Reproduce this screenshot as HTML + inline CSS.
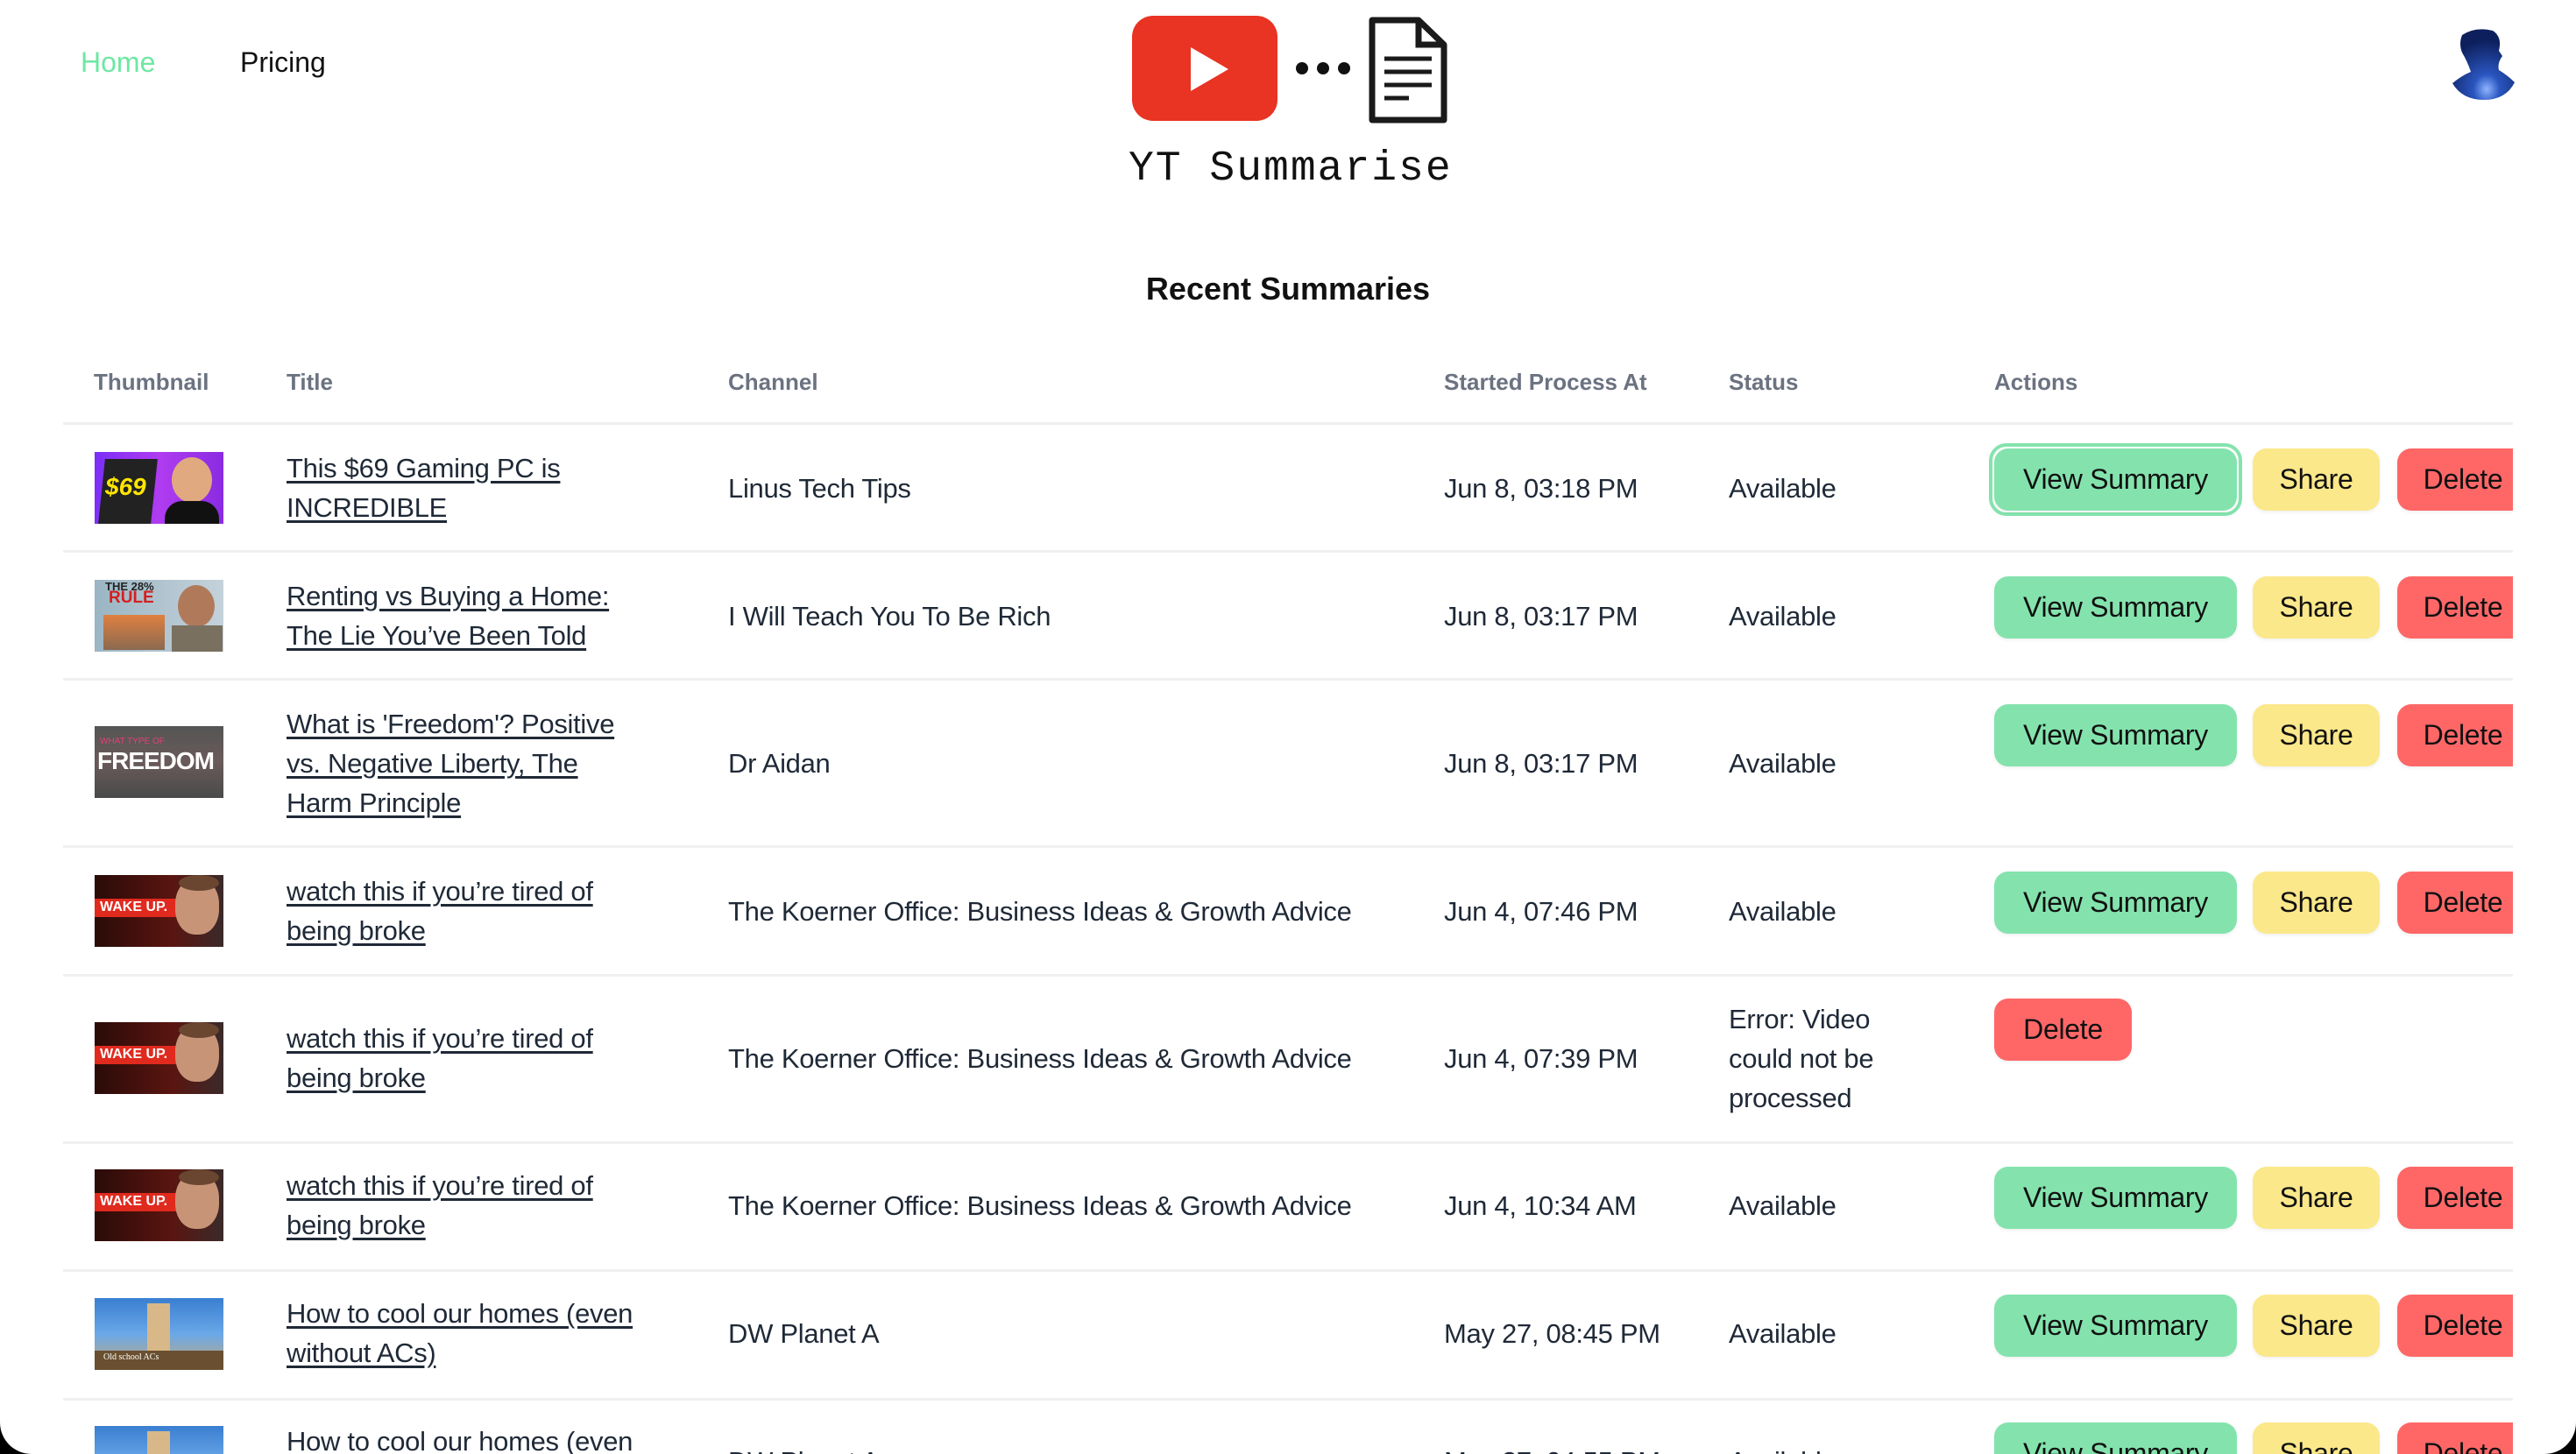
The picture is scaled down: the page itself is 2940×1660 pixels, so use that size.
<!DOCTYPE html>
<html><head><meta charset="utf-8"><style>
*{margin:0;padding:0;box-sizing:border-box}
html,body{width:2940px;height:1660px;overflow:hidden;background:#000}
#pg{position:absolute;left:0;top:0;width:2940px;height:1660px;background:#fff;border-radius:0 0 36px 36px;overflow:hidden;font-family:"Liberation Sans",sans-serif;color:#1f2937}
.a{position:absolute}
.nav{font-size:32px;top:53px}
.h{font-size:26px;font-weight:bold;color:#6b7280;top:421px}
.line{position:absolute;left:72px;width:2796px;height:3px;background:#f0f0f0}
.t{position:absolute;font-size:31px;line-height:45px;white-space:nowrap;letter-spacing:-0.3px}
.u{text-decoration:underline;text-decoration-thickness:3px;text-underline-offset:4px}
.th{position:absolute;left:108px;width:147px;height:82px;overflow:hidden}
.clip{position:absolute;left:2250px;top:484px;width:618px;height:1176px;overflow:hidden}
.b{position:absolute;height:71px;border-radius:16px;font-size:32px;line-height:71px;text-align:center;color:#111;letter-spacing:-0.3px;box-shadow:0 2px 4px rgba(0,0,0,.06)}
.g{background:#84e3ad;left:26px;width:277px}
.y{background:#fbe88a;left:321px;width:145px}
.r{background:#ff6767;left:486px;width:150px}
</style></head><body><div id="pg">
<div class="a nav" style="left:92px;color:#6ee7a3">Home</div>
<div class="a nav" style="left:274px;color:#111">Pricing</div>
<svg class="a" style="left:1286px;top:14px" width="370" height="132" viewBox="0 0 370 132">
<rect x="6" y="4" width="166" height="120" rx="24" fill="#e93323"/>
<path d="M73 40 L73 90 L116 65 Z" fill="#fff"/>
<circle cx="200" cy="64" r="7" fill="#111"/><circle cx="224" cy="64" r="7" fill="#111"/><circle cx="248" cy="64" r="7" fill="#111"/>
<path d="M280 9 H333 L362 37 V123 H280 Z" fill="none" stroke="#1a1a1a" stroke-width="7" stroke-linejoin="round"/>
<path d="M333 9 V37 H362" fill="none" stroke="#1a1a1a" stroke-width="7"/>
<path d="M294 53 H348 M294 68 H348 M294 83 H348 M294 98 H322" stroke="#1a1a1a" stroke-width="5"/>
</svg>
<div class="a" style="left:1288px;top:166px;font-family:'Liberation Mono',monospace;font-size:48px;color:#111;letter-spacing:2px">YT Summarise</div>
<svg class="a" style="left:2790px;top:30px" width="90" height="86" viewBox="0 0 90 86"><defs><radialGradient id="sg" cx="0.55" cy="0.85" r="0.7"><stop offset="0" stop-color="#8fb4ff"/><stop offset="0.3" stop-color="#2a56c0"/><stop offset="1" stop-color="#0d1f5c"/></radialGradient></defs>
<path d="M20 10 Q35 0 55 5 Q66 12 62 28 L66 34 Q60 42 62 50 Q72 56 80 64 Q70 84 45 84 Q20 84 9 65 Q20 56 30 52 Q26 40 20 30 Q16 20 20 10Z" fill="url(#sg)"/></svg>
<div class="a" style="left:0;width:2940px;text-align:center;top:309px;font-size:36px;font-weight:bold;color:#111">Recent Summaries</div>
<div class="a h" style="left:107px">Thumbnail</div>
<div class="a h" style="left:327px">Title</div>
<div class="a h" style="left:831px">Channel</div>
<div class="a h" style="left:1648px">Started Process At</div>
<div class="a h" style="left:1973px">Status</div>
<div class="a h" style="left:2276px">Actions</div>
<div class="line" style="top:482px"></div>
<div class="line" style="top:628px"></div>
<div class="line" style="top:774px"></div>
<div class="line" style="top:965px"></div>
<div class="line" style="top:1112px"></div>
<div class="line" style="top:1303px"></div>
<div class="line" style="top:1449px"></div>
<div class="line" style="top:1596px"></div>

<div class="th" style="top:516px;background:linear-gradient(90deg,#7b2ff7,#b03cf0 50%,#8a2be2)"><div class="a" style="left:8px;top:8px;width:60px;height:74px;background:#222;transform:skewX(-6deg)"></div><div class="a" style="left:12px;top:24px;font:bold italic 28px 'Liberation Sans';color:#ffe600">$69</div><div class="a" style="left:88px;top:6px;width:46px;height:52px;border-radius:50%;background:#e0a980"></div><div class="a" style="left:80px;top:56px;width:62px;height:30px;background:#111;border-radius:20px 20px 0 0"></div></div>
<div class="th" style="top:662px;background:linear-gradient(90deg,#9bb5c4,#c4d2da)"><div class="a" style="left:12px;top:0;font:bold 13px 'Liberation Sans';color:#222">THE 28%</div><div class="a" style="left:16px;top:10px;font:bold 19px 'Liberation Sans';color:#d42020">RULE</div><div class="a" style="left:10px;top:40px;width:70px;height:40px;background:linear-gradient(#e08040,#8a6a50)"></div><div class="a" style="left:95px;top:6px;width:42px;height:48px;border-radius:50%;background:#b07a5a"></div><div class="a" style="left:88px;top:52px;width:58px;height:32px;background:#7a7060"></div></div>
<div class="th" style="top:829px;background:linear-gradient(#555 0%,#6a5a5a 50%,#4a4a4a)"><div class="a" style="left:3px;top:24px;font:bold 28px 'Liberation Sans';color:#fff;letter-spacing:-1px">FREEDOM</div><div class="a" style="left:6px;top:12px;font:10px 'Liberation Sans';color:#e0407a">WHAT TYPE OF</div></div>
<div class="th" style="top:999px;background:linear-gradient(90deg,#2a0b08,#5a1510 60%,#3a2a2a)"><div class="a" style="left:0;top:27px;width:95px;height:21px;background:#e02a1e"></div><div class="a" style="left:6px;top:28px;font:bold 16px 'Liberation Sans';color:#fff">WAKE UP.</div><div class="a" style="left:92px;top:4px;width:50px;height:64px;border-radius:45%;background:#c89478"></div><div class="a" style="left:96px;top:0;width:46px;height:18px;border-radius:50%;background:#6a4630"></div></div>
<div class="th" style="top:1167px;background:linear-gradient(90deg,#2a0b08,#5a1510 60%,#3a2a2a)"><div class="a" style="left:0;top:27px;width:95px;height:21px;background:#e02a1e"></div><div class="a" style="left:6px;top:28px;font:bold 16px 'Liberation Sans';color:#fff">WAKE UP.</div><div class="a" style="left:92px;top:4px;width:50px;height:64px;border-radius:45%;background:#c89478"></div><div class="a" style="left:96px;top:0;width:46px;height:18px;border-radius:50%;background:#6a4630"></div></div>
<div class="th" style="top:1335px;background:linear-gradient(90deg,#2a0b08,#5a1510 60%,#3a2a2a)"><div class="a" style="left:0;top:27px;width:95px;height:21px;background:#e02a1e"></div><div class="a" style="left:6px;top:28px;font:bold 16px 'Liberation Sans';color:#fff">WAKE UP.</div><div class="a" style="left:92px;top:4px;width:50px;height:64px;border-radius:45%;background:#c89478"></div><div class="a" style="left:96px;top:0;width:46px;height:18px;border-radius:50%;background:#6a4630"></div></div>
<div class="th" style="top:1482px;background:linear-gradient(#3a7ed0,#6aa8e8 50%,#c8a878)"><div class="a" style="left:60px;top:6px;width:26px;height:60px;background:#d8b888"></div><div class="a" style="left:0;top:60px;width:147px;height:22px;background:#6a5030"></div><div class="a" style="left:10px;top:62px;font:10px 'Liberation Serif';color:#fff">Old school ACs</div></div>
<div class="th" style="top:1628px;background:linear-gradient(#3a7ed0,#6aa8e8 50%,#c8a878)"><div class="a" style="left:60px;top:6px;width:26px;height:60px;background:#d8b888"></div></div>

<div class="t u" style="left:327px;top:512px">This $69 Gaming PC is<br>INCREDIBLE</div>
<div class="t u" style="left:327px;top:658px">Renting vs Buying a Home:<br>The Lie You’ve Been Told</div>
<div class="t u" style="left:327px;top:804px">What is 'Freedom'? Positive<br>vs. Negative Liberty, The<br>Harm Principle</div>
<div class="t u" style="left:327px;top:995px">watch this if you’re tired of<br>being broke</div>
<div class="t u" style="left:327px;top:1163px">watch this if you’re tired of<br>being broke</div>
<div class="t u" style="left:327px;top:1331px">watch this if you’re tired of<br>being broke</div>
<div class="t u" style="left:327px;top:1477px">How to cool our homes (even<br>without ACs)</div>
<div class="t" style="left:327px;top:1623px">How to cool our homes (even</div>

<div class="t" style="left:831px;top:535px">Linus Tech Tips</div>
<div class="t" style="left:831px;top:681px">I Will Teach You To Be Rich</div>
<div class="t" style="left:831px;top:849px">Dr Aidan</div>
<div class="t" style="left:831px;top:1018px">The Koerner Office: Business Ideas &amp; Growth Advice</div>
<div class="t" style="left:831px;top:1186px">The Koerner Office: Business Ideas &amp; Growth Advice</div>
<div class="t" style="left:831px;top:1354px">The Koerner Office: Business Ideas &amp; Growth Advice</div>
<div class="t" style="left:831px;top:1500px">DW Planet A</div>
<div class="t" style="left:831px;top:1646px">DW Planet A</div>

<div class="t" style="left:1648px;top:535px">Jun 8, 03:18 PM</div>
<div class="t" style="left:1648px;top:681px">Jun 8, 03:17 PM</div>
<div class="t" style="left:1648px;top:849px">Jun 8, 03:17 PM</div>
<div class="t" style="left:1648px;top:1018px">Jun 4, 07:46 PM</div>
<div class="t" style="left:1648px;top:1186px">Jun 4, 07:39 PM</div>
<div class="t" style="left:1648px;top:1354px">Jun 4, 10:34 AM</div>
<div class="t" style="left:1648px;top:1500px">May 27, 08:45 PM</div>
<div class="t" style="left:1648px;top:1646px">May 27, 04:55 PM</div>

<div class="t" style="left:1973px;top:535px">Available</div>
<div class="t" style="left:1973px;top:681px">Available</div>
<div class="t" style="left:1973px;top:849px">Available</div>
<div class="t" style="left:1973px;top:1018px">Available</div>
<div class="t" style="left:1973px;top:1141px">Error: Video<br>could not be<br>processed</div>
<div class="t" style="left:1973px;top:1354px">Available</div>
<div class="t" style="left:1973px;top:1500px">Available</div>
<div class="t" style="left:1973px;top:1646px">Available</div>

<div class="clip">
<div class="a" style="left:20px;top:22px;width:289px;height:83px;border:4px solid #84e3ad;border-radius:20px"></div>
<div class="b g" style="top:28px">View Summary</div><div class="b y" style="top:28px">Share</div><div class="b r" style="top:28px">Delete</div>
<div class="b g" style="top:174px">View Summary</div><div class="b y" style="top:174px">Share</div><div class="b r" style="top:174px">Delete</div>
<div class="b g" style="top:320px">View Summary</div><div class="b y" style="top:320px">Share</div><div class="b r" style="top:320px">Delete</div>
<div class="b g" style="top:511px">View Summary</div><div class="b y" style="top:511px">Share</div><div class="b r" style="top:511px">Delete</div>
<div class="b r" style="top:656px;left:26px;width:157px">Delete</div>
<div class="b g" style="top:848px">View Summary</div><div class="b y" style="top:848px">Share</div><div class="b r" style="top:848px">Delete</div>
<div class="b g" style="top:994px">View Summary</div><div class="b y" style="top:994px">Share</div><div class="b r" style="top:994px">Delete</div>
<div class="b g" style="top:1140px">View Summary</div><div class="b y" style="top:1140px">Share</div><div class="b r" style="top:1140px">Delete</div>
</div>
</div></body></html>
